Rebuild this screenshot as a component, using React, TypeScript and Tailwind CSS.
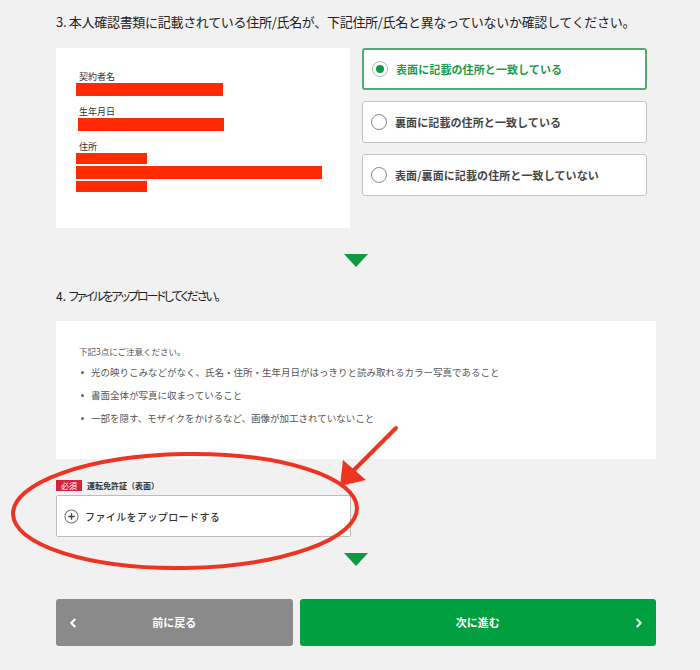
import { ChevronLeft, ChevronRight } from 'lucide-react'

const JP = "font-['Noto_Sans_CJK_JP','Noto_Sans',sans-serif]"

const options = [
  { label: '表面に記載の住所と一致している', checked: true },
  { label: '裏面に記載の住所と一致している', checked: false },
  { label: '表面/裏面に記載の住所と一致していない', checked: false },
]

const notes = [
  '光の映りこみなどがなく、氏名・住所・生年月日がはっきりと読み取れるカラー写真であること',
  '書面全体が写真に収まっていること',
  '一部を隠す、モザイクをかけるなど、画像が加工されていないこと',
]

function Triangle() {
  return (
    <div className="flex justify-center">
      <svg width="24" height="13" viewBox="0 0 24 13">
        <polygon points="0,0 24,0 12,13" fill="#0e9a42" />
      </svg>
    </div>
  )
}

function Redact({ w }: { w: number }) {
  return <div className="h-[13px] bg-[#ff2a00]" style={{ width: w }} />
}

export default function App() {
  return (
    <div className={`relative h-[670px] w-[700px] overflow-hidden bg-[#f1f1f1] text-[#333] ${JP}`}>
      <div className="ml-[56px] w-[600px] pt-[13px]">
        <h2 className="text-[13px] font-normal leading-[18px] tracking-[-0.3px] text-[#222]">
          3. 本人確認書類に記載されている住所/氏名が、下記住所/氏名と異なっていないか確認してください。
        </h2>

        <div className="mt-[17px] flex gap-[12px]">
          <div className="h-[180px] w-[294px] bg-white pl-[20px] pt-[23px]">
            <div className="pl-[3px] text-[9px] leading-[12px]">契約者名</div>
            <Redact w={147} />
            <div className="mt-[10px] pl-[3px] text-[9px] leading-[12px]">生年月日</div>
            <div className="pl-[2px]"><Redact w={146} /></div>
            <div className="mt-[10px] pl-[3px] text-[9px] leading-[12px]">住所</div>
            <div className="flex flex-col gap-[2px]">
              <div className="h-[11px] w-[71px] bg-[#ff2a00]" />
              <Redact w={246} />
              <div className="h-[11px] w-[71px] bg-[#ff2a00]" />
            </div>
          </div>

          <div className="flex w-[285px] flex-col gap-[11px]">
            {options.map((o) => (
              <div
                key={o.label}
                className={`flex h-[42px] items-center gap-[8px] rounded-[3px] bg-white pl-[8px] ${
                  o.checked ? 'border-2 border-[#4caf6e]' : 'border border-[#c4c4c4]'
                }`}
              >
                <span
                  className={`flex h-[16px] w-[16px] items-center justify-center rounded-full border ${
                    o.checked ? 'border-[#8fcfa2]' : 'border-[#888]'
                  }`}
                >
                  {o.checked && <span className="h-[8px] w-[8px] rounded-full bg-[#129a45]" />}
                </span>
                <span
                  className={`text-[11px] font-bold tracking-[0.1px] ${
                    o.checked ? 'text-[#1e9a48]' : 'text-[#444]'
                  }`}
                >
                  {o.label}
                </span>
              </div>
            ))}
          </div>
        </div>

        <div className="mt-[26px]">
          <Triangle />
        </div>

        <h2 className="mt-[20px] text-[12px] font-normal leading-[18px] text-[#222]">
          4.{' '}
          <span className="tracking-[-2px] [font-feature-settings:'palt']">ファイルをアップロードしてください。</span>
        </h2>

        <div className="mt-[16px] h-[138px] bg-white pl-[23px] pt-[24px] text-[#555]">
          <p className="text-[8.5px] leading-[12px]">下記3点にご注意ください。</p>
          <ul className="mt-[9px] flex flex-col gap-[11px]">
            {notes.map((n) => (
              <li key={n} className="flex items-center gap-[7px] text-[9.5px] leading-[12px]">
                <span className="ml-[2px] h-[3px] w-[3px] rounded-full bg-[#666]" />
                {n}
              </li>
            ))}
          </ul>
        </div>

        <div className="mt-[21px] flex items-center gap-[5px]">
          <span className="bg-[#d2223d] px-[5px] text-[8px] leading-[11px] text-white">必須</span>
          <span className="text-[8px] font-bold leading-[11px]">運転免許証（表面）</span>
        </div>
        <div className="mt-[4px] flex h-[42px] w-[295px] items-center gap-[6px] rounded-[2px] border border-[#bdbdbd] bg-white pl-[7px]">
          <svg width="15" height="15" viewBox="0 0 16 16">
            <circle cx="8" cy="8" r="7" fill="none" stroke="#777" strokeWidth="1.1" />
            <path d="M8 4.5v7M4.5 8h7" stroke="#444" strokeWidth="1.4" />
          </svg>
          <span className="text-[10px] font-medium tracking-[0.4px] text-[#333]">ファイルをアップロードする</span>
        </div>

        <div className="mt-[16px]">
          <Triangle />
        </div>

        <div className="mt-[33px] flex gap-[7px]">
          <button className="flex h-[47px] w-[237px] items-center rounded-[3px] bg-[#8a8a8a] px-[10px] text-[11px] font-bold text-white">
            <ChevronLeft size={14} strokeWidth={3.5} />
            <span className="flex-1 pr-[14px] text-center">前に戻る</span>
          </button>
          <button className="flex h-[47px] w-[357px] items-center rounded-[3px] bg-[#00a040] px-[10px] text-[11px] font-bold text-white">
            <span className="flex-1 pl-[14px] text-center">次に進む</span>
            <ChevronRight size={14} strokeWidth={3.5} />
          </button>
        </div>
      </div>

      {/* annotation overlay */}
      <svg className="pointer-events-none absolute left-0 top-0" width="700" height="670">
        <ellipse cx="185" cy="511" rx="172" ry="57" fill="none" stroke="#ee3420" strokeWidth="4" transform="rotate(-1 185 511)" />
        <line x1="396" y1="428" x2="350" y2="474" stroke="#ee3420" strokeWidth="4" strokeLinecap="round" />
        <polygon points="340,486 343,460 366,480" fill="#ee3420" />
      </svg>
    </div>
  )
}
